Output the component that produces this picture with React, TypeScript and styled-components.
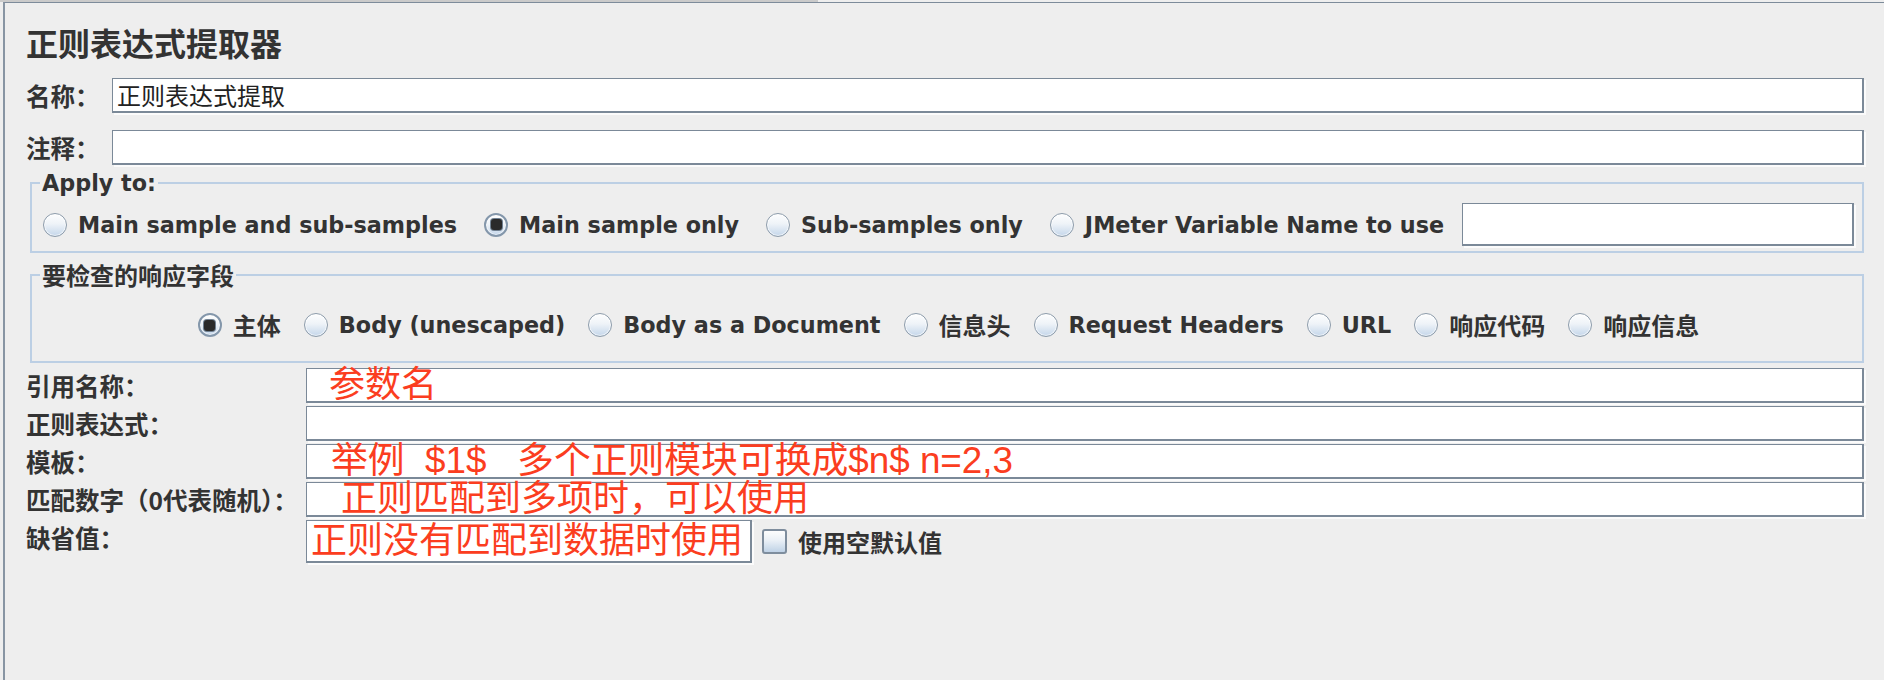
import React from 'react';
import styled, { createGlobalStyle } from 'styled-components';

const UI = `"DejaVu Sans", "Noto Sans CJK SC", sans-serif`;
const CJK = `"Noto Sans CJK SC", "DejaVu Sans", sans-serif`;
const NOTE = `"Liberation Sans", "Noto Sans CJK SC", sans-serif`;

const GlobalStyle = createGlobalStyle`
  html, body { margin: 0; padding: 0; background: #eeeeee; }
  body { width: 1884px; height: 680px; overflow: hidden; color: #333333; font-family: ${UI}; }
  #root { height: 680px; }
`;

const Page = styled.div`
  display: flex;
  flex-direction: column;
  height: 680px;
  background: #eeeeee;
`;

const TopStrip = styled.div`
  height: 2px;
  display: flex;
`;

const TopStripShade = styled.div`
  width: 818px;
  background: #cacaca;
`;

const Panel = styled.div`
  flex: 1;
  margin-left: 3px;
  border-top: 1px solid #7d8b9a;
  border-left: 2px solid #8895a3;
  padding: 0 20px 0 21px;
  display: flex;
  flex-direction: column;
`;

const Title = styled.h1`
  margin: 21px 0 0 0;
  font: bold 32px/36px ${CJK};
  color: #333333;
`;

const Row = styled.div<{ $mt: number; $align?: string }>`
  display: flex;
  align-items: ${(p) => p.$align ?? 'flex-start'};
  margin-top: ${(p) => p.$mt}px;
`;

const Label = styled.div<{ $w: number }>`
  flex: none;
  width: ${(p) => p.$w}px;
  font: bold 24.5px/35px ${CJK};
  color: #333333;
  white-space: nowrap;
`;

const TextField = styled.div<{ $h?: number; $w?: number; $indent?: number }>`
  box-sizing: border-box;
  display: flex;
  align-items: center;
  ${(p) => (p.$w ? `width: ${p.$w}px; flex: none;` : 'flex: 1; min-width: 0;')}
  height: ${(p) => p.$h ?? 35}px;
  background: #ffffff;
  border-top: 1px solid #7b8998;
  border-left: 1px solid #7b8998;
  border-right: 2px solid #7b8998;
  border-bottom: 2px solid #7b8998;
  box-shadow: 2px 2px 0 #fbfbfb;
  padding-left: ${(p) => p.$indent ?? 4}px;
  overflow: visible;
  white-space: pre;
`;

const FieldValue = styled.span`
  font: 24px/1 ${CJK};
  color: #222222;
`;

const NoteText = styled.span<{ $size?: number }>`
  font: ${(p) => p.$size ?? 36}px/1 ${NOTE};
  color: #fb3d20;
  white-space: pre;
`;

const Group = styled.fieldset<{ $mt: number; $pt: number; $pb: number }>`
  margin: ${(p) => p.$mt}px 0 0 4px;
  min-width: 0;
  border: 2px solid #bccfe4;
  padding: ${(p) => p.$pt}px 8px ${(p) => p.$pb}px 11px;
`;

const Legend = styled.legend<{ $cjk?: boolean }>`
  margin-left: -3px;
  padding: 0 2px;
  font: bold ${(p) => (p.$cjk ? '24px' : '22.3px')}/26px ${(p) => (p.$cjk ? CJK : UI)};
  color: #333333;
`;

const ApplyRow = styled.div`
  display: flex;
  align-items: center;
  gap: 18px;
`;

const RadioList = styled.div<{ $center?: boolean; $gap: number }>`
  display: flex;
  align-items: center;
  justify-content: ${(p) => (p.$center ? 'center' : 'flex-start')};
  gap: ${(p) => p.$gap}px;
  flex: ${(p) => (p.$center ? 1 : 'none')};
`;

const RadioItem = styled.label`
  display: inline-flex;
  align-items: center;
  gap: 11px;
  white-space: nowrap;
`;

const RadioDot = styled.span<{ $on?: boolean }>`
  position: relative;
  flex: none;
  box-sizing: border-box;
  width: 24px;
  height: 24px;
  border-radius: 50%;
  border: ${(p) => (p.$on ? '2px solid #8497ab' : '1.5px solid #8d9cab')};
  background: linear-gradient(#fefefe 0%, #eef3f8 45%, #c4d6ea 100%);
  box-shadow: inset 0 0 0 1px rgba(255, 255, 255, 0.6);
  &::after {
    content: '';
    display: ${(p) => (p.$on ? 'block' : 'none')};
    position: absolute;
    left: 4.5px;
    top: 4.5px;
    width: 11px;
    height: 11px;
    border-radius: 3px;
    background: #2a2a2a;
    box-shadow: 0 0 0 1px #6f7f90;
  }
`;

const RadioText = styled.span<{ $cjk?: boolean }>`
  font: bold ${(p) => (p.$cjk ? '24px' : '22.3px')}/26px ${(p) => (p.$cjk ? CJK : UI)};
  color: #333333;
`;

const CheckBox = styled.span`
  flex: none;
  box-sizing: border-box;
  width: 25px;
  height: 25px;
  margin-left: 10px;
  border: 2px solid #7e8d9d;
  border-radius: 3px;
  background: linear-gradient(#fdfdfd 0%, #eaf0f6 45%, #bfd2e6 100%);
`;

const CheckText = styled.span`
  margin-left: 11px;
  font: bold 24px/26px ${CJK};
  color: #333333;
`;

type Radio = { text: string; on?: boolean; cjk?: boolean };

const applyOptions: Radio[] = [
  { text: 'Main sample and sub-samples' },
  { text: 'Main sample only', on: true },
  { text: 'Sub-samples only' },
  { text: 'JMeter Variable Name to use' },
];

const fieldOptions: Radio[] = [
  { text: '主体', on: true, cjk: true },
  { text: 'Body (unescaped)' },
  { text: 'Body as a Document' },
  { text: '信息头', cjk: true },
  { text: 'Request Headers' },
  { text: 'URL' },
  { text: '响应代码', cjk: true },
  { text: '响应信息', cjk: true },
];

const RadioOption = ({ r }: { r: Radio }) => (
  <RadioItem>
    <RadioDot $on={r.on} />
    <RadioText $cjk={r.cjk}>{r.text}</RadioText>
  </RadioItem>
);

type Extract = { label: string; note?: string; indent?: number; size?: number };

const extractRows: Extract[] = [
  { label: '引用名称：', note: '参数名', indent: 22 },
  { label: '正则表达式：' },
  { label: '模板：', note: '举例  $1$   多个正则模块可换成$n$ n=2,3', indent: 24, size: 36.8 },
  { label: '匹配数字（0代表随机）：', note: '正则匹配到多项时，可以使用', indent: 34 },
];

export default function App() {
  return (
    <>
      <GlobalStyle />
      <Page>
        <TopStrip>
          <TopStripShade />
        </TopStrip>
        <Panel>
          <Title>正则表达式提取器</Title>

          <Row $mt={18}>
            <Label $w={86}>名称：</Label>
            <TextField>
              <FieldValue>正则表达式提取</FieldValue>
            </TextField>
          </Row>
          <Row $mt={17}>
            <Label $w={86}>注释：</Label>
            <TextField />
          </Row>

          <Group $mt={5} $pt={7} $pb={5}>
            <Legend>Apply to:</Legend>
            <ApplyRow>
              <RadioList $gap={27}>
                {applyOptions.map((r) => (
                  <RadioOption key={r.text} r={r} />
                ))}
              </RadioList>
              <TextField $h={43} />
            </ApplyRow>
          </Group>

          <Group $mt={9} $pt={24} $pb={23}>
            <Legend $cjk>要检查的响应字段</Legend>
            <RadioList $center $gap={23}>
              {fieldOptions.map((r) => (
                <RadioOption key={r.text} r={r} />
              ))}
            </RadioList>
          </Group>

          {extractRows.map((e, i) => (
            <Row key={e.label} $mt={i === 0 ? 5 : 3}>
              <Label $w={280}>{e.label}</Label>
              <TextField $indent={e.indent}>
                {e.note && <NoteText $size={e.size}>{e.note}</NoteText>}
              </TextField>
            </Row>
          ))}

          <Row $mt={3}>
            <Label $w={280}>缺省值：</Label>
            <Row $mt={0} $align="center">
              <TextField $w={446} $h={43}>
                <NoteText>正则没有匹配到数据时使用</NoteText>
              </TextField>
              <CheckBox />
              <CheckText>使用空默认值</CheckText>
            </Row>
          </Row>
        </Panel>
      </Page>
    </>
  );
}
